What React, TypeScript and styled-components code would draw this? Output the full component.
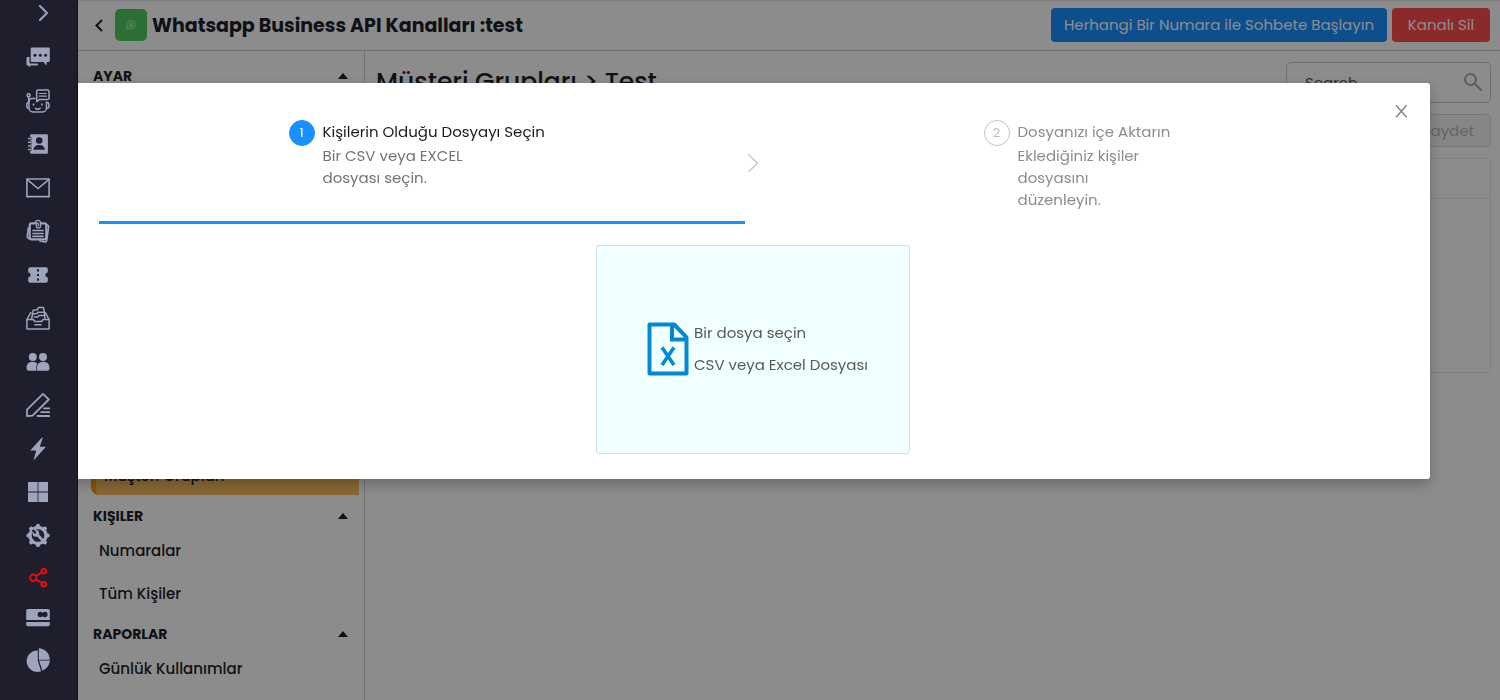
import React from "react";
import styled, { createGlobalStyle, css } from "styled-components";

const GlobalStyle = createGlobalStyle`
  * { box-sizing: border-box; }
  body {
    margin: 0;
    background: #fff;
    color: #1e1e2d;
    font-family: Poppins, Inter, "Open Sans", sans-serif;
    font-size: 15px;
    line-height: 22px;
    overflow: hidden;
  }
  button, input { font: inherit; }
  h1, h2, h3, p, ul { margin: 0; padding: 0; }
`;

const Shell = styled.div`
  display: flex;
  height: 100vh;
  overflow: hidden;
`;

/* ---------- icon rail ---------- */

const Rail = styled.nav`
  position: relative;
  z-index: 20;
  flex: none;
  width: 78px;
  padding: 1px 1px 0 0;
  display: flex;
  flex-direction: column;
  align-items: center;
  gap: 20px;
  background: #1e1e2d;
  border-right: 1px solid #101018;
`;

const RailLink = styled.a<{ $height: number; $active?: boolean }>`
  flex: none;
  display: flex;
  align-items: center;
  justify-content: center;
  width: 40px;
  height: ${(p) => p.$height}px;
  color: ${(p) => (p.$active ? "#f0080c" : "#9ea4bd")};
`;

const RailToggle = styled.button`
  flex: none;
  display: flex;
  align-items: center;
  justify-content: center;
  width: 40px;
  height: 24px;
  padding: 0 0 0 10px;
  border: 0;
  background: none;
  color: #9a9bc0;
`;

type RailItem = { label: string; height: number; active?: boolean; art: React.ReactNode };

const stroke = { fill: "none", stroke: "currentColor", strokeLinecap: "round" as const, strokeLinejoin: "round" as const };

const railItems: RailItem[] = [
  {
    label: "Sohbetler",
    height: 24,
    art: (
      <>
        <path fill="currentColor" d="M6 2.500h16.500a1.300 1.300 0 0 1 1.300 1.300v12a1.300 1.300 0 0 1-1.300 1.300H21l-.8 3.400-2.700-3.400H6a1.300 1.300 0 0 1-1.300-1.300v-12A1.300 1.300 0 0 1 6 2.500z" />
        <path fill="currentColor" d="M1.500 12h2v5.500c0 .6.400 1 1 1H12v1.200a.8.8 0 0 1-.8.8H4.500L3.200 22.300 2.400 20.500h-.9a1 1 0 0 1-1-1V13a1 1 0 0 1 1-1z" />
        <g fill="#1e1e2d"><circle cx="9" cy="10.200" r="1.500" /><circle cx="14.300" cy="10.200" r="1.500" /><circle cx="19.600" cy="10.200" r="1.500" /></g>
      </>
    ),
  },
  {
    label: "Bot",
    height: 23,
    art: (
      <g {...stroke} strokeWidth="1.500">
        <path d="M9 9.500H6a3 3 0 0 0-3 3V19a4 4 0 0 0 4 4h9.500a4 4 0 0 0 4-4v-6" />
        <path d="M2.800 13.500c-1.500 0-2 .8-2 2.200v1.600c0 1.200.6 2 2 2M20.700 13.500c1.700 0 2.300.8 2.300 2.200v1.600c0 1.200-.7 2-2.300 2" />
        <path d="M2.600 13V8" /><circle cx="2.600" cy="6.300" r="1.500" />
        <path d="M11.500 1h9.800c1 0 1.700.7 1.700 1.700v6.200c0 1-.7 1.700-1.700 1.700h-8l-2.600 2.200V2.400c0-.8.3-1.400.8-1.400z" />
        <path d="M13.300 4.500h7M13.300 7.200h7" strokeWidth="1.200" />
        <path d="M9.500 19.300c1.300 1 3.300 1 4.600 0M7.500 15.200v.6M16 15.200v.6" strokeWidth="1.700" />
      </g>
    ),
  },
  {
    label: "Rehber",
    height: 24,
    art: (
      <>
        <path fill="currentColor" fillRule="evenodd" d="M5.500 2.200h15a1.400 1.400 0 0 1 1.400 1.400v16.800a1.400 1.400 0 0 1-1.400 1.400h-15a1.400 1.400 0 0 1-1.400-1.400V3.600a1.400 1.400 0 0 1 1.400-1.400zM13.200 5.200a3.300 3.300 0 1 0 0 6.600 3.300 3.300 0 0 0 0-6.600zM7.500 17.800h11.400c-.1-3.200-2.600-4.900-5.700-4.900s-5.600 1.700-5.700 4.900z" />
        <path stroke="#1e1e2d" strokeWidth="3" d="M3.500 6.500h2M3.500 10.200h2M3.500 13.900h2M3.500 17.600h2" />
        <path {...stroke} strokeWidth="1.500" d="M2.500 6.500h2.300M2.500 10.200h2.300M2.500 13.900h2.300M2.500 17.600h2.300" />
      </>
    ),
  },
  {
    label: "E-posta",
    height: 23,
    art: (
      <g fill="none" stroke="currentColor" strokeWidth="1.600">
        <path d="M.9 3h22.200v17.600H.9z" />
        <path d="m1.300 3.700 10.700 8.800L22.700 3.700" />
      </g>
    ),
  },
  {
    label: "Notlar",
    height: 24,
    art: (
      <>
        <g {...stroke}>
          <rect x="3.700" y="4.300" width="16.600" height="16" rx="2" strokeWidth="2.200" />
          <path d="m2.300 9-1 8.700c-.1 1 .4 1.600 1.200 1.700l1.200.4M21.500 6c.8.3 1.200.8 1.100 1.600l-1.900 13.700c-.2 1.300-.7 1.700-1.800 1.500l-5-.8" strokeWidth="1.700" />
          <path d="M7 11.500h10M7 14.500h10M7 17.300h10" strokeWidth="1.700" />
        </g>
        <path fill="#1e1e2d" d="M9 3h6v5H9z" />
        <path {...stroke} strokeWidth="1.300" d="M9.300 4.300V3.600c0-3 5.200-3 5.200 0v3.300c0 2.700-4.200 2.700-4.200 0V4.700c0-1.200 2-1.200 2 0v2" />
      </>
    ),
  },
  {
    label: "Biletler",
    height: 23,
    art: (
      <>
        <path fill="currentColor" d="M4 4.300h16a1.800 1.800 0 0 1 1.800 1.800v3.500a2.400 2.400 0 0 0 0 4.800v3.500a1.800 1.800 0 0 1-1.800 1.800H4a1.800 1.800 0 0 1-1.800-1.800v-3.500a2.400 2.400 0 0 0 0-4.800V6.100A1.800 1.800 0 0 1 4 4.300z" />
        <path fill="#1e1e2d" d="M11 6.300h2v2.200h-2zM11 10.900h2v2.200h-2zM11 15.500h2v2.200h-2z" />
      </>
    ),
  },
  {
    label: "Arşiv",
    height: 24,
    art: (
      <g {...stroke} strokeWidth="1.500">
        <path d="M.9 13.500h6.300l1.500 2h6.800l1.500-2h6.100v9.600H.9z" />
        <path d="m1.200 13 3.500-6.300M22.800 13l-3.500-6.300" />
        <path d="m5.600 12.500 1-4.500 4.300-.4 1.200-1.400h6.300l.5 6.300" />
        <path d="m6.300 7.600.9-3.400 4-.4 1.200-2.300h5.200l.7 4.300M8.300 11h3.500l1.300-1.500h5" />
        <path d="M9 18.700h6" />
      </g>
    ),
  },
  {
    label: "Kişiler",
    height: 23,
    art: (
      <g fill="currentColor">
        <circle cx="6.800" cy="7" r="4" />
        <circle cx="17" cy="7" r="4" />
        <path d="M.6 17.300c0-3.500 2.500-5.600 6-5.600 2 0 3.600.7 4.700 1.800-.7 1.100-1 2.400-1 3.800v3.400H2.600a2 2 0 0 1-2-2z" />
        <path d="M11 17.300c0-3.500 2.600-5.600 6.200-5.600s6.200 2.100 6.200 5.600v1.400a2 2 0 0 1-2 2H11z" />
      </g>
    ),
  },
  {
    label: "Şablonlar",
    height: 24,
    art: (
      <g {...stroke} strokeWidth="1.800">
        <path d="M1 23v-6.300L17 .9 22.800 6.500 6.500 22.700 1 23z" />
        <path d="M18 15.300h5.200M15.200 19.200h8M11.500 23h11.700" />
      </g>
    ),
  },
  {
    label: "Otomasyon",
    height: 23,
    art: <path fill="currentColor" d="M16 .5 4.200 13.500h6L7.500 23.500 20 9.700h-6.200L16.800.8z" />,
  },
  {
    label: "Uygulamalar",
    height: 24,
    art: <path fill="currentColor" d="M2 2h9.600v9.600H2zM12.400 2H22v9.600h-9.600zM2 12.400h9.600V22H2zM12.400 12.400H22V22h-9.600z" />,
  },
  {
    label: "Ayarlar",
    height: 23,
    art: (
      <>
        <g fill="currentColor">
          <circle cx="12" cy="11.500" r="9.700" />
          {[0, 45, 90, 135, 180, 225, 270, 315].map((a) => (
            <path key={a} transform={`rotate(${a} 12 11.500)`} d="M9.500 3 10.400.4c.1-.3.300-.5.600-.5h2c.3 0 .5.200.6.500L14.500 3z" />
          ))}
        </g>
        <circle cx="12" cy="11.500" r="6.300" fill="#1e1e2d" />
        <path {...stroke} strokeWidth="2.800" d="m11.300 10.800 5.600 5.600" />
        <circle cx="9.900" cy="9.400" r="3.300" fill="currentColor" />
        <path stroke="#1e1e2d" strokeWidth="2.200" d="m6.500 6 3.300 3.300" />
      </>
    ),
  },
  {
    label: "Kanallar",
    height: 21,
    active: true,
    art: (
      <g fill="none" stroke="currentColor" strokeWidth="2">
        <circle cx="7.300" cy="11.700" r="3.200" />
        <circle cx="17.800" cy="5.300" r="2.300" />
        <circle cx="17.800" cy="18.200" r="2.300" />
        <path d="m10 10 5.700-3.500M10 13.400l5.700 3.600" />
      </g>
    ),
  },
  {
    label: "Ödemeler",
    height: 20,
    art: (
      <>
        <path fill="currentColor" d="M1.800 3h20.400a1.600 1.600 0 0 1 1.600 1.600v9.300H.2V4.600A1.600 1.600 0 0 1 1.800 3zM.2 16h23.600v2.600a1.600 1.600 0 0 1-1.600 1.600H1.800a1.600 1.600 0 0 1-1.600-1.600z" />
        <circle cx="14.300" cy="8.500" r="2.700" fill="#1e1e2d" />
        <circle cx="18.900" cy="8.500" r="2.700" fill="#1e1e2d" />
      </>
    ),
  },
  {
    label: "Raporlar",
    height: 24,
    art: (
      <g fill="currentColor">
        <path d="M11.800 2.500V12.500l3.300 10.700A10.700 10.700 0 1 1 11.800 2.500z" />
        <path d="M12.800.3c6 .2 10.600 4.600 11 11.400h-11z" />
        <path d="M13.100 12.600h10.700c-.1 4.300-2.800 8.200-7.500 10z" />
      </g>
    ),
  },
];

/* ---------- page behind the dialog ---------- */

const Page = styled.div`
  flex: 1;
  min-width: 0;
  display: flex;
  flex-direction: column;
  border-top: 1px solid #e4e6ea;
`;

const TopBar = styled.header`
  flex: none;
  display: flex;
  align-items: center;
  height: 50px;
  padding: 0 10px 1px 11px;
  border-bottom: 1px solid #c9d0d6;
`;

const BackButton = styled.button`
  display: flex;
  width: 20px;
  height: 20px;
  margin-right: 6px;
  padding: 0;
  border: 0;
  background: none;
  color: inherit;
`;

const ChannelBadge = styled.span`
  display: flex;
  align-items: center;
  justify-content: center;
  width: 32px;
  height: 32px;
  margin-right: 5px;
  border-radius: 5px;
  background: #51cb5f;
  color: #b4f4ba;
`;

const TopTitle = styled.h1`
  flex: 1;
  padding-top: 2px;
  font-size: 19px;
  font-weight: 700;
  line-height: 28px;
  white-space: nowrap;
`;

const TopActions = styled.div`
  display: flex;
  gap: 5px;
`;

const SolidButton = styled.button<{ $color: string }>`
  min-width: 98px;
  height: 34px;
  padding: 0 13px;
  border: 0;
  border-radius: 4px;
  background: ${(p) => p.$color};
  color: #fff;
  white-space: nowrap;
`;

const Columns = styled.div`
  flex: 1;
  min-height: 0;
  display: flex;
`;

const Menu = styled.aside`
  flex: none;
  width: 287px;
  padding: 9px 5px 0 13px;
  border-right: 1px solid #c9d0d6;
  overflow: hidden;
`;

const MenuHeader = styled.button`
  display: flex;
  align-items: center;
  justify-content: space-between;
  width: 100%;
  height: 32px;
  padding: 0 11px 0 2px;
  border: 0;
  background: none;
  color: inherit;
  font-size: 14px;
  font-weight: 700;
`;

const Caret = styled.span`
  border: 5px solid transparent;
  border-top: 0;
  border-bottom: 6px solid currentColor;
`;

const MenuList = styled.ul<{ $minHeight?: number }>`
  display: flex;
  flex-direction: column;
  justify-content: flex-end;
  gap: 5px;
  min-height: ${(p) => p.$minHeight ?? 0}px;
  margin-bottom: 5px;
  list-style: none;
`;

const MenuLink = styled.a<{ $active?: boolean }>`
  display: flex;
  align-items: center;
  height: 38px;
  padding-left: 8px;
  color: #1e1e2d;
  font-weight: 500;
  text-decoration: none;
  ${(p) =>
    p.$active &&
    css`
      border-left: 5px solid #f99c00;
      border-radius: 8px 0 0 8px;
      background: #f9bd60;
    `}
`;

const Content = styled.main`
  flex: 1;
  min-width: 0;
  display: flex;
  flex-direction: column;
  align-items: flex-end;
  gap: 11px;
  padding: 11px 9px 0 11px;
`;

const ContentHead = styled.div`
  display: flex;
  align-items: flex-start;
  justify-content: space-between;
  width: 100%;
`;

const ContentTitle = styled.h2`
  font-size: 25px;
  font-weight: 500;
  line-height: 40px;
`;

const SearchField = styled.label`
  display: flex;
  align-items: center;
  width: 205px;
  height: 41px;
  padding: 0 7px 0 18px;
  border: 1px solid #c4c8d8;
  border-radius: 5px;
  color: #a4a9b6;
`;

const SearchInput = styled.input`
  flex: 1;
  min-width: 0;
  padding: 0;
  border: 0;
  outline: 0;
  background: none;
  &::placeholder { color: #55565f; opacity: 1; }
`;

const SaveButton = styled.button`
  height: 33px;
  padding: 0 16px;
  border: 1px solid #d9d9d9;
  border-radius: 4px;
  background: #f5f5f5;
  color: #b8b8b8;
`;

const Card = styled.section`
  width: 100%;
  height: 215px;
  border: 1px solid #eaeaea;
  border-radius: 4px;
`;

const CardHead = styled.div`
  height: 40px;
  border-bottom: 1px solid #eaeaea;
`;

/* ---------- dialog ---------- */

const Mask = styled.div`
  position: fixed;
  inset: 0;
  z-index: 10;
  padding: 83px 70px 0;
  background: rgba(0, 0, 0, 0.45);
`;

const Dialog = styled.div`
  position: relative;
  padding: 36px 23px 25px 29px;
  border-radius: 3px;
  background: #fff;
  box-shadow: 0 5px 14px rgba(0, 0, 0, 0.25);
`;

const CloseButton = styled.button`
  position: absolute;
  top: 18px;
  right: 19px;
  display: flex;
  width: 20px;
  height: 20px;
  padding: 0;
  border: 0;
  background: none;
  color: #858585;
`;

const Steps = styled.div`
  display: grid;
  grid-template-columns: 1fr 16px 1fr;
`;

const Step = styled.div<{ $active?: boolean }>`
  display: flex;
  justify-content: center;
  min-height: 105px;
  padding-right: 12px;
  border-bottom: 3px solid ${(p) => (p.$active ? "#1890ff" : "transparent")};
`;

const StepBody = styled.div<{ $width: number }>`
  display: flex;
  align-items: flex-start;
  gap: 8px;
  width: ${(p) => p.$width}px;
`;

const StepNumber = styled.span<{ $active?: boolean }>`
  flex: none;
  width: 26px;
  height: 26px;
  margin-top: 1px;
  border: 1px solid ${(p) => (p.$active ? "#1890ff" : "#c4c4c4")};
  border-radius: 50%;
  background: ${(p) => (p.$active ? "#1890ff" : "#fff")};
  color: ${(p) => (p.$active ? "#fff" : "#bdbdbd")};
  font-size: 13px;
  line-height: 24px;
  text-align: center;
`;

const StepTitle = styled.h3<{ $active?: boolean }>`
  color: ${(p) => (p.$active ? "#1a1a1a" : "#8c8c8c")};
  font-size: 15px;
  font-weight: 400;
  line-height: 26px;
  white-space: nowrap;
`;

const StepText = styled.p<{ $active?: boolean }>`
  max-width: 145px;
  color: ${(p) => (p.$active ? "#737373" : "#8c8c8c")};
`;

const StepArrow = styled.svg`
  align-self: start;
  justify-self: center;
  margin-top: 34px;
`;

const UploadButton = styled.button`
  display: flex;
  align-items: center;
  gap: 5px;
  width: 314px;
  height: 209px;
  margin: 21px auto 0;
  padding: 0 0 2px 50px;
  border: 1px solid #d9dede;
  border-radius: 3px;
  background: #f0ffff;
  color: #595959;
  text-align: left;
`;

const UploadText = styled.span`
  display: flex;
  flex-direction: column;
  gap: 10px;
`;

export default function App() {
  return (
    <Shell>
      <GlobalStyle />
      <Rail>
        <RailToggle aria-label="Menüyü aç">
          <svg width="12" height="18" viewBox="0 0 12 18" {...stroke} strokeWidth="2.200">
            <path d="m3 2 7 7-7 7" />
          </svg>
        </RailToggle>
        {railItems.map((item) => (
          <RailLink key={item.label} href="#" aria-label={item.label} $height={item.height} $active={item.active}>
            <svg width="24" height="24" viewBox="0 0 24 24">{item.art}</svg>
          </RailLink>
        ))}
      </Rail>

      <Page>
        <TopBar>
          <BackButton aria-label="Geri">
            <svg width="20" height="20" viewBox="0 0 20 20" fill="none" stroke="currentColor" strokeWidth="2">
              <path d="m13 5-5.500 5.500 5.500 5.500" />
            </svg>
          </BackButton>
          <ChannelBadge>
            <svg width="10" height="10" viewBox="0 0 20 20" {...stroke} strokeWidth="1.800">
              <path d="m1.500 18.500 1.300-4.300a8.500 8.500 0 1 1 3.300 3.100z" />
              <path d="M8 6h2.800a2 2 0 0 1 0 4H8zM8 10h3.200a2 2 0 0 1 0 4H8z" />
            </svg>
          </ChannelBadge>
          <TopTitle>Whatsapp Business API Kanalları :test</TopTitle>
          <TopActions>
            <SolidButton $color="#1890ff">Herhangi Bir Numara ile Sohbete Başlayın</SolidButton>
            <SolidButton $color="#ff4d4f">Kanalı Sil</SolidButton>
          </TopActions>
        </TopBar>
        <Columns>
          <Menu>
            <MenuHeader>AYAR<Caret /></MenuHeader>
            <MenuList $minHeight={403}>
              <li><MenuLink href="#" $active>Müşteri Grupları</MenuLink></li>
            </MenuList>
            <MenuHeader>KIŞILER<Caret /></MenuHeader>
            <MenuList>
              <li><MenuLink href="#">Numaralar</MenuLink></li>
              <li><MenuLink href="#">Tüm Kişiler</MenuLink></li>
            </MenuList>
            <MenuHeader>RAPORLAR<Caret /></MenuHeader>
            <MenuList>
              <li><MenuLink href="#">Günlük Kullanımlar</MenuLink></li>
            </MenuList>
          </Menu>
          <Content>
            <ContentHead>
              <ContentTitle>Müşteri Grupları &gt; Test</ContentTitle>
              <SearchField>
                <SearchInput type="search" placeholder="Search" aria-label="Search" />
                <svg width="20" height="20" viewBox="0 0 20 20" fill="none" stroke="currentColor" strokeWidth="2">
                  <circle cx="7.500" cy="6.500" r="5.500" />
                  <path d="m11.500 10.500 7 7" />
                </svg>
              </SearchField>
            </ContentHead>
            <SaveButton disabled>Kaydet</SaveButton>
            <Card><CardHead /></Card>
          </Content>
        </Columns>
      </Page>

      <Mask>
        <Dialog role="dialog" aria-modal="true">
          <CloseButton aria-label="Kapat">
            <svg width="20" height="20" viewBox="0 0 20 20" fill="none" stroke="currentColor" strokeWidth="1.500">
              <path d="m5 4.300 10.600 12M15.600 4.300 5 16.300" />
            </svg>
          </CloseButton>
          <Steps>
            <Step $active>
              <StepBody $width={255}>
                <StepNumber $active>1</StepNumber>
                <div>
                  <StepTitle $active>Kişilerin Olduğu Dosyayı Seçin</StepTitle>
                  <StepText $active>Bir CSV veya EXCEL dosyası seçin.</StepText>
                </div>
              </StepBody>
            </Step>
            <StepArrow width="12" height="20" viewBox="0 0 12 20" fill="none" stroke="#c2c2c2" strokeWidth="1.300">
              <path d="m1.500 1.500 9 8.700-9 8.700" />
            </StepArrow>
            <Step>
              <StepBody $width={189}>
                <StepNumber>2</StepNumber>
                <div>
                  <StepTitle>Dosyanızı içe Aktarın</StepTitle>
                  <StepText>Eklediğiniz kişiler dosyasını düzenleyin.</StepText>
                </div>
              </StepBody>
            </Step>
          </Steps>
          <UploadButton>
            <svg width="42" height="54" viewBox="0 0 42 54" fill="none" stroke="#0489d1" strokeWidth="4">
              <path d="M2.500 2.500h24.700l12.300 12.800v36.200h-37z" strokeLinejoin="round" />
              <path d="M25 3v14.500h14" />
              <path d="m15 25.500 12 17.500M27 25.500 15 43" strokeWidth="3.600" />
            </svg>
            <UploadText>
              <span>Bir dosya seçin</span>
              <span>CSV veya Excel Dosyası</span>
            </UploadText>
          </UploadButton>
        </Dialog>
      </Mask>
    </Shell>
  );
}
